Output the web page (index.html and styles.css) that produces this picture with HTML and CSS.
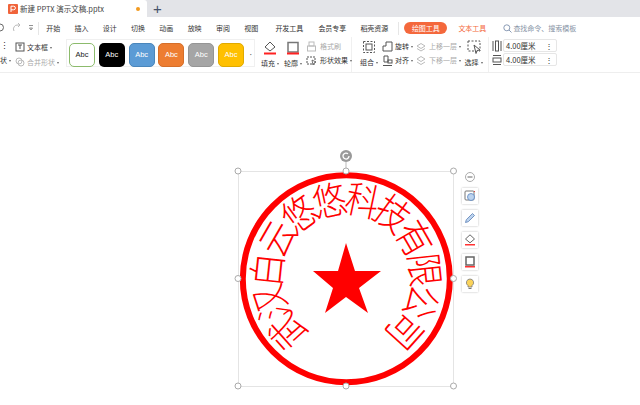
FILE: index.html
```html
<!DOCTYPE html>
<html lang="zh">
<head>
<meta charset="utf-8">
<title>新建 PPTX 演示文稿.pptx</title>
<link rel="stylesheet" href="styles.css">
</head>
<body>
<div class="app">
  <header class="tabbar">
    <div class="tab">
      <svg class="tab-icon" width="10" height="10" viewBox="0 0 10 10"><rect width="10" height="10" rx="1" fill="#f0633a"/><path d="M3 8V2.200h2.600a1.700 1.700 0 0 1 0 3.600H3" fill="none" stroke="#fff" stroke-width="1"/></svg>
      <span class="tab-title">新建 PPTX 演示文稿.pptx</span>
      <span class="tab-dot"></span>
    </div>
    <span class="tab-add">+</span>
  </header>

  <nav class="menu">
    <svg class="undo" width="36" height="12" viewBox="0 0 36 12"><path d="M0 2a3.400 3.400 0 0 1 0 7" fill="none" stroke="#666" stroke-width="1"/><path d="M14 9a4 4 0 0 1 4-6h2M18 1l2 2-2 2" fill="none" stroke="#bbb" stroke-width="1"/><path d="M29 3.500h4M29.500 6l1.500 2 1.500-2z" fill="none" stroke="#777" stroke-width=".8"/></svg>
    <span class="menu-sep"></span>
    <span class="menu-item w28">开始</span>
    <span class="menu-item w28">插入</span>
    <span class="menu-item w28">设计</span>
    <span class="menu-item w28">切换</span>
    <span class="menu-item w28">动画</span>
    <span class="menu-item w28">放映</span>
    <span class="menu-item w28">审阅</span>
    <span class="menu-item w28">视图</span>
    <span class="menu-item w48">开发工具</span>
    <span class="menu-item w38">会员专享</span>
    <span class="menu-item w46">稻壳资源</span>
    <span class="menu-sep sep-b"></span>
    <span class="pill">绘图工具</span>
    <span class="menu-orange">文本工具</span>
    <svg class="search" width="9" height="9" viewBox="0 0 9 9"><circle cx="3.800" cy="3.800" r="3" fill="none" stroke="#8a9bb5"/><path d="M6 6l2.500 2.500" stroke="#8a9bb5"/></svg>
    <span class="search-text">查找命令、搜索模板</span>
  </nav>

  <section class="ribbon">
    <div class="col g-left"><span class="tiny">⋮</span><span class="lbl">状<i class="caret"></i></span></div>

    <div class="col g-text">
      <span class="line"><svg width="10" height="10" viewBox="0 0 10 10"><rect x="1" y="1" width="8" height="8" fill="none" stroke="#555"/><path d="M3 3h4M5 3v4" stroke="#555"/></svg><span class="lbl">文本框<i class="caret"></i></span></span>
      <span class="line off"><svg width="10" height="10" viewBox="0 0 10 10"><circle cx="4" cy="4" r="3" fill="none" stroke="#bbb"/><circle cx="6" cy="6" r="3" fill="none" stroke="#bbb"/></svg><span class="lbl">合并形状<i class="caret"></i></span></span>
    </div>

    <div class="gallery">
      <span class="swatch s-white">Abc</span>
      <span class="swatch s-black">Abc</span>
      <span class="swatch s-blue">Abc</span>
      <span class="swatch s-orange">Abc</span>
      <span class="swatch s-gray">Abc</span>
      <span class="swatch s-yellow">Abc</span>
      <span class="more">▪</span>
    </div>

    <div class="col big g-fill">
      <svg width="14" height="14" viewBox="0 0 14 14"><path d="M7 1l5 5-5 4-5-4z" fill="none" stroke="#555"/><rect x="1" y="11.500" width="12" height="2" fill="#f22"/></svg>
      <span class="lbl">填充<i class="caret"></i></span>
    </div>
    <div class="col big g-line">
      <svg width="14" height="14" viewBox="0 0 14 14"><rect x="2" y="1.500" width="10" height="9.500" fill="none" stroke="#777" stroke-width="1.500"/><rect x="1" y="11.500" width="12" height="2" fill="#f22"/></svg>
      <span class="lbl">轮廓<i class="caret"></i></span>
    </div>

    <div class="col g-effect">
      <span class="line off"><svg width="11" height="11" viewBox="0 0 11 11"><rect x="3" y="1" width="5" height="4" fill="none" stroke="#bbb"/><rect x="1.500" y="5" width="8" height="5" fill="none" stroke="#bbb"/></svg><span class="lbl">格式刷</span></span>
      <span class="line"><svg width="11" height="11" viewBox="0 0 11 11"><rect x="1" y="2" width="8" height="7" fill="none" stroke="#555" stroke-dasharray="2 1"/><path d="M6 5l4 2-2 1-1 2z" fill="#fff" stroke="#555" stroke-width=".8"/></svg><span class="lbl">形状效果<i class="caret"></i></span></span>
    </div>

    <div class="col big g-group">
      <svg width="14" height="14" viewBox="0 0 14 14"><rect x="1.500" y="1.500" width="11" height="11" fill="none" stroke="#555" stroke-dasharray="2 1.500"/><rect x="4" y="4" width="6" height="6" fill="none" stroke="#555"/></svg>
      <span class="lbl">组合<i class="caret"></i></span>
    </div>

    <div class="col g-rotate">
      <span class="line"><svg width="11" height="11" viewBox="0 0 11 11"><path d="M1 10V5h3V1h6v9z" fill="none" stroke="#555"/></svg><span class="lbl">旋转<i class="caret"></i></span></span>
      <span class="line"><svg width="11" height="11" viewBox="0 0 11 11"><path d="M1 10.500h9M2 1h4v6H2z" fill="none" stroke="#555"/><rect x="6" y="5" width="4" height="3" fill="none" stroke="#555"/></svg><span class="lbl">对齐<i class="caret"></i></span></span>
    </div>

    <div class="col g-layer off">
      <span class="line"><svg width="11" height="11" viewBox="0 0 11 11"><path d="M1 5l4-2.500L9 5 5 7.500zM1 7.500l4 2.500 4-2.500" fill="none" stroke="#bbb"/></svg><span class="lbl">上移一层<i class="caret"></i></span></span>
      <span class="line"><svg width="11" height="11" viewBox="0 0 11 11"><path d="M1 4l4-2.500L9 4 5 6.500zM1 7l4 2.500L9 7" fill="none" stroke="#bbb"/></svg><span class="lbl">下移一层<i class="caret"></i></span></span>
    </div>

    <div class="col big g-select">
      <svg width="14" height="14" viewBox="0 0 14 14"><rect x="1" y="1" width="12" height="10" fill="none" stroke="#555" stroke-dasharray="2 1.500"/><path d="M7 5l6 5-3 .5-1 3z" fill="#fff" stroke="#555"/></svg>
      <span class="lbl">选择<i class="caret"></i></span>
    </div>

    <div class="g-size">
      <div class="size-row"><svg width="10" height="12" viewBox="0 0 10 12"><path d="M1 1v10M9 1v10" stroke="#555"/><rect x="3.500" y="1" width="3" height="10" fill="none" stroke="#555"/></svg><span class="field">4.00厘米<i class="spin">⋮</i></span></div>
      <div class="size-row"><svg width="10" height="12" viewBox="0 0 10 12"><path d="M1 1.500h8M1 10.500h8" stroke="#555"/><rect x="1" y="4" width="8" height="4" fill="none" stroke="#555"/></svg><span class="field">4.00厘米<i class="spin">⋮</i></span></div>
    </div>
  </section>

  <main class="stage">
    <svg class="canvas" width="640" height="332" viewBox="0 73 640 332">
      <rect x="238.500" y="171.500" width="215" height="215" fill="none" stroke="#e4e4e4"/>
      <path d="M346 162v9" stroke="#bbb"/>
      <circle cx="346.300" cy="278.700" r="103.500" fill="none" stroke="#f00" stroke-width="6"/>
      <polygon points="346,243 355,271 381,271 359,288 368,313 346,297 325,313 333,288 313,271 338,271" fill="#f00"/>
      <g class="seal">
        <text transform="rotate(-132 346 278) translate(346 196) scale(1.050 1.200)">武</text>
        <text transform="rotate(-108 346 278) translate(346 196) scale(1.050 1.200)">汉</text>
        <text transform="rotate(-84 346 278) translate(346 196) scale(1.050 1.200)">白</text>
        <text transform="rotate(-60 346 278) translate(346 196) scale(1.050 1.200)">云</text>
        <text transform="rotate(-36 346 278) translate(346 196) scale(1.050 1.200)">悠</text>
        <text transform="rotate(-12 346 278) translate(346 196) scale(1.050 1.200)">悠</text>
        <text transform="rotate(12 346 278) translate(346 196) scale(1.050 1.200)">科</text>
        <text transform="rotate(36 346 278) translate(346 196) scale(1.050 1.200)">技</text>
        <text transform="rotate(60 346 278) translate(346 196) scale(1.050 1.200)">有</text>
        <text transform="rotate(84 346 278) translate(346 196) scale(1.050 1.200)">限</text>
        <text transform="rotate(108 346 278) translate(346 196) scale(1.050 1.200)">公</text>
        <text transform="rotate(132 346 278) translate(346 196) scale(1.050 1.200)">司</text>
      </g>
      <circle cx="346" cy="156" r="6" fill="#999"/>
      <path d="M349 156a3 3 0 1 1-1-2.200" fill="none" stroke="#fff" stroke-width="1.300"/>
      <g fill="#fff" stroke="#aaa">
        <circle cx="238" cy="171" r="3"/><circle cx="346" cy="171" r="3"/><circle cx="453.500" cy="171" r="3"/>
        <circle cx="238" cy="278.500" r="3"/><circle cx="453.500" cy="278.500" r="3"/>
        <circle cx="238" cy="386" r="3"/><circle cx="346" cy="386" r="3"/><circle cx="453.500" cy="386" r="3"/>
      </g>
    </svg>

    <aside class="float">
      <svg width="10" height="10" viewBox="0 0 10 10"><circle cx="5" cy="5" r="4.500" fill="#fff" stroke="#aaa"/><path d="M2.500 5h5" stroke="#666"/></svg>
      <span class="fbtn"><svg width="12" height="12" viewBox="0 0 12 12"><rect x="1" y="1" width="9" height="9" rx="1" fill="none" stroke="#777"/><circle cx="7" cy="7" r="3.500" fill="#bcd3ee" stroke="#5b86c0" stroke-width=".8"/><path d="M10 1l1 1" stroke="#e44"/></svg></span>
      <span class="fbtn"><svg width="12" height="12" viewBox="0 0 12 12"><path d="M1.500 10.500l.8-2.800L8.500 1.500l2 2-6.200 6.200z" fill="#bcd3ee" stroke="#5b7fb5" stroke-width=".8"/></svg></span>
      <span class="fbtn"><svg width="12" height="12" viewBox="0 0 12 12"><path d="M6 .8L10.500 5 6 8.800 1.500 5z" fill="none" stroke="#666"/><rect x="1" y="10" width="10" height="1.500" fill="#f33"/></svg></span>
      <span class="fbtn"><svg width="12" height="12" viewBox="0 0 12 12"><rect x="2" y="1" width="8" height="8" fill="none" stroke="#666" stroke-width="1.500"/><rect x="1" y="10" width="10" height="1.500" fill="#f33"/></svg></span>
      <span class="fbtn"><svg width="12" height="12" viewBox="0 0 12 12"><path d="M6 1a3.600 3.600 0 0 1 2 6.600V9H4V7.600A3.600 3.600 0 0 1 6 1z" fill="#fbd35a" stroke="#777" stroke-width=".8"/><path d="M4.500 10.500h3" stroke="#777"/></svg></span>
    </aside>
  </main>
</div>
</body>
</html>
```
FILE: styles.css
```css
* { box-sizing: border-box; }
html, body { margin: 0; height: 100%; overflow: hidden; background: #fff; }
body { font-family: "Noto Sans CJK SC", "Liberation Sans", sans-serif; font-size: 7px; color: #333; }
svg { flex: none; }
.app { width: 640px; height: 405px; display: flex; flex-direction: column; }

.tabbar { height: 17px; background: #e3e4e8; display: flex; align-items: stretch; flex: none; }
.tab { width: 147px; background: #fff; display: flex; align-items: center; padding-left: 8px; border-radius: 0 3px 0 0; }
.tab-title { margin-left: 2px; white-space: nowrap; color: #444; line-height: 17px; font-size: 7.500px; }
.tab-dot { width: 4px; height: 4px; border-radius: 50%; background: #f29a1f; margin-left: auto; margin-right: 7px; }
.tab-add { margin-left: 6px; font: 15px/17px "Liberation Sans", sans-serif; color: #46536b; }

.menu { height: 20px; padding-top: 2px; display: flex; align-items: center; flex: none; }
.undo { margin-right: 2px; }
.menu-sep { width: 1px; height: 13px; background: #e6e6e6; flex: none; }
.menu-item { text-align: center; flex: none; white-space: nowrap; }
.w28 { width: 28.300px; }
.w48 { width: 48px; }
.w38 { width: 38px; }
.w46 { width: 46px; }
.sep-b { margin-left: 1px; margin-right: 5px; }
.pill { width: 43px; height: 12px; line-height: 12px; border-radius: 6px; background: #f4683c; color: #fff; text-align: center; flex: none; }
.menu-orange { color: #f4683c; margin-left: 11px; flex: none; }
.search { margin-left: 17px; }
.search-text { color: #8793a5; margin-left: 1px; white-space: nowrap; }

.ribbon { height: 36px; display: flex; flex: none; border-bottom: 1px solid #eee; box-shadow: 0 1px 1px #f4f4f4; }
.col { display: flex; flex-direction: column; flex: none; }
.col.big { align-items: center; gap: 2px; }
.line { display: flex; align-items: center; gap: 2px; height: 14px; white-space: nowrap; }
.lbl { white-space: nowrap; line-height: 12px; }
.off { color: #aaa; }
.caret { display: inline-block; width: 0; height: 0; margin-left: 2px; vertical-align: middle; border: 1.500px solid transparent; border-top: 2px solid #666; border-bottom: 0; }
.tiny { height: 16px; line-height: 16px; font-size: 9px; }

.g-left { width: 15px; padding-top: 1px; }
.g-text { width: 51px; padding-top: 2px; }
.g-text .line { height: 15px; }
.gallery { width: 189px; height: 28px; margin-top: 2px; padding: 3px 0 0 2px; display: flex; gap: 3.800px; border: 1px solid #f0f0f0; flex: none; }
.swatch { width: 26px; height: 24px; border-radius: 5px; text-align: center; font: 7.500px/24px "Liberation Sans", sans-serif; color: #fff; flex: none; }
.s-white { background: #fff; border: 1px solid #8cbb6c; color: #222; line-height: 22px; }
.s-black { background: #000; }
.s-blue { background: #5b9bd5; border: 1px solid #4a86bb; line-height: 22px; }
.s-orange { background: #ed7d31; border: 1px solid #d56f2a; line-height: 22px; }
.s-gray { background: #a5a5a5; border: 1px solid #959595; line-height: 22px; }
.s-yellow { background: #ffc000; border: 1px solid #e0aa00; line-height: 22px; }
.more { font-size: 4px; line-height: 24px; color: #777; margin-left: 1px; }

.g-fill { width: 24px; margin-left: 3px; padding-top: 4px; }
.g-line { width: 22px; padding-top: 4px; }
.g-effect { width: 46px; margin-left: 2px; padding-top: 2px; border-right: 1px solid #f0f0f0; }
.g-effect .line { gap: 3px; }
.g-group { width: 26px; margin-left: 4px; padding-top: 3px; }
.g-rotate { width: 34px; padding-top: 2px; }
.g-layer { width: 48px; padding-top: 2px; }
.g-select { width: 19px; padding-top: 3px; }
.g-size { margin-left: 5px; padding: 2px 3px 0 3px; border-left: 1px solid #f0f0f0; width: 72px; display: flex; flex-direction: column; gap: 1px; flex: none; }
.size-row { display: flex; align-items: center; gap: 1px; height: 13px; }
.field { width: 54px; height: 13px; border: 1px solid #e6e6e6; border-radius: 2px; padding-left: 2px; display: flex; justify-content: space-between; line-height: 11px; flex: none; font-size: 7.500px; }
.spin { font-style: normal; margin-right: 3px; }

.stage { flex: 1; position: relative; background: #fff; }
.canvas { position: absolute; left: 0; top: 0; display: block; }
.seal text { font-family: "Noto Sans CJK SC", sans-serif; font-size: 32px; font-weight: 300; fill: #f00; text-anchor: middle; dominant-baseline: central; }

.float { position: absolute; left: 462px; top: 99px; width: 16px; display: flex; flex-direction: column; align-items: center; gap: 6px; }
.fbtn { width: 16px; height: 16px; background: #fff; box-shadow: 0 0 2px #bbb; display: flex; align-items: center; justify-content: center; }
```
